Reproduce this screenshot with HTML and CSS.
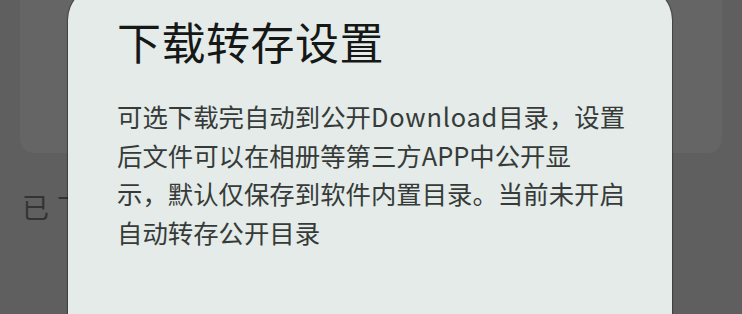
FILE: index.html
```html
<!DOCTYPE html>
<html lang="zh-CN">
<head>
<meta charset="utf-8">
<link rel="stylesheet" href="styles.css">
</head>
<body>
<div class="page">
  <div class="card"></div>
  <div class="section-label">已下载</div>
</div>
<div class="dialog">
  <h1 class="dialog-title">下载转存设置</h1>
  <p class="dialog-text">可选下载完自动到公开<span class="latin">Download</span>目录，设置<br>后文件可以在相册等第三方APP中公开显<br>示，默认仅保存到软件内置目录。当前未开启<br>自动转存公开目录</p>
</div>
</body>
</html>
```
FILE: styles.css
```css
html, body {
  margin: 0;
  padding: 0;
  width: 742px;
  height: 314px;
  overflow: hidden;
  background: #5f5f5f;
  font-family: "Noto Sans CJK SC", "Noto Sans", sans-serif;
}

.page {
  position: relative;
  width: 742px;
  height: 314px;
  display: flex;
  flex-direction: column;
  padding: 0 20px;
  box-sizing: border-box;
}

.card {
  margin-top: -40px;
  height: 193px;
  background: #656565;
  border-radius: 14px;
}

.section-label {
  margin-top: 35px;
  margin-left: 2px;
  font-size: 27px;
  line-height: 38px;
  letter-spacing: 8px;
  color: #333333;
}

.dialog {
  position: absolute;
  left: 68px;
  top: -14px;
  width: 604px;
  height: 328px;
  box-sizing: border-box;
  padding: 33px 48px 0 49px;
  background: #e4ebe8;
  border-radius: 34px 34px 0 0;
  box-shadow: 0 0 1px 1px rgba(0, 0, 0, 0.35);
  overflow: hidden;
}

.dialog-title {
  margin: 0;
  font-size: 44px;
  font-weight: 400;
  line-height: 44px;
  color: #161817;
  letter-spacing: 0.5px;
}

.dialog-text {
  margin: 34px 0 0 0;
  font-size: 25.4px;
  line-height: 38.6px;
  color: #363b39;
  white-space: nowrap;
}

.latin {
  letter-spacing: 0.8px;
}
```
